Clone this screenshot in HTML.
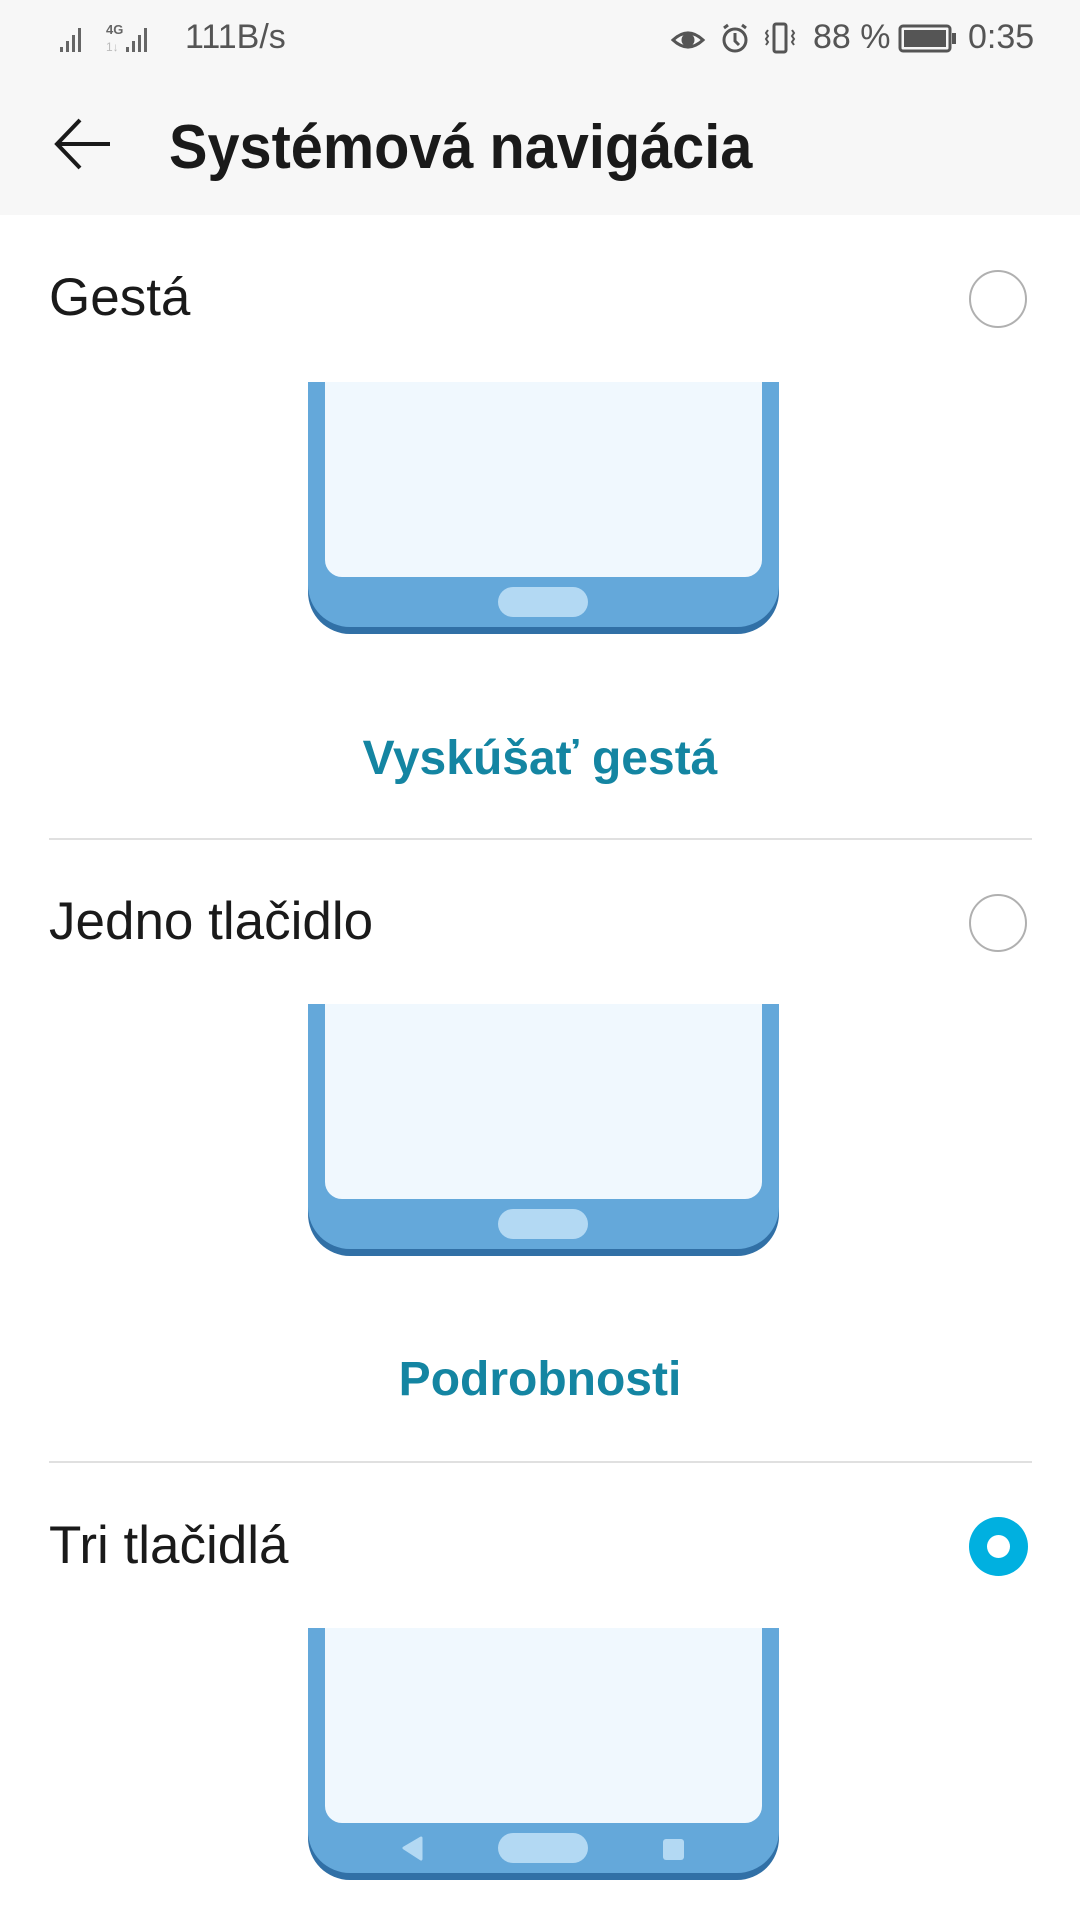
<!DOCTYPE html>
<html><head><meta charset="utf-8"><style>
body{margin:0;width:1080px;height:1920px;background:#fff;font-family:"Liberation Sans",Roboto,sans-serif;position:relative;overflow:hidden}
.hdr{position:absolute;left:0;top:0;width:1080px;height:215px;background:#f7f7f7}
.t{position:absolute;white-space:nowrap}
.sb{color:#555;font-size:34px;top:18px}
.lbl{left:49px;font-size:53px;color:#1a1a1a}
.btn{left:0;width:1080px;text-align:center;font-size:48px;font-weight:bold;color:#1485a2}
.div{position:absolute;left:49px;width:983px;height:2px;background:#e0e0e0}
.radio{position:absolute;left:969px;width:54px;height:54px;border:2.5px solid #b0b0b0;border-radius:50%}
.phone{position:absolute;left:308px}
</style></head><body>
<div class="hdr"></div>
<svg class="t" style="left:58px;top:20px" width="110" height="34" viewBox="0 0 110 34">
<g fill="#666"><rect x="2" y="27" width="3" height="5"/><rect x="8" y="21" width="3" height="11"/><rect x="14" y="15" width="3" height="17"/><rect x="20" y="8" width="3" height="24"/>
<text x="48" y="14" font-size="13" font-weight="bold" font-family="Liberation Sans">4G</text>
<rect x="68" y="27" width="3" height="5"/><rect x="74" y="21" width="3" height="11"/><rect x="80" y="15" width="3" height="17"/><rect x="86" y="8" width="3" height="24"/></g>
<text x="48" y="31" font-size="12" fill="#bbb" font-family="Liberation Sans">1↓</text></svg>
<div class="t sb" style="left:185px">111B/s</div>
<svg class="t" style="left:670px;top:20px" width="140" height="36" viewBox="0 0 140 36">
<g fill="none" stroke="#555" stroke-width="3"><path d="M3 20 Q18 6 33 20 Q18 34 3 20Z"/><circle cx="18" cy="20" r="5" fill="#555"/>
<circle cx="65" cy="20" r="11"/><path d="M65 13v8l4 4M54 8l4-3M76 8l-4-3"/>
<rect x="104" y="4" width="12" height="28" rx="2"/><path d="M98 10l-2 3 2 3-2 3 2 3-2 3M122 10l2 3-2 3 2 3-2 3 2 3" stroke-width="2"/></g></svg>
<div class="t sb" style="left:813px">88 %</div>
<svg class="t" style="left:898px;top:24px" width="60" height="30"><rect x="2" y="2" width="50" height="25" rx="3" fill="none" stroke="#555" stroke-width="3"/><rect x="6" y="6" width="42" height="17" fill="#555"/><rect x="54" y="9" width="4" height="11" fill="#555"/></svg>
<div class="t sb" style="left:968px">0:35</div>
<svg class="t" style="left:52px;top:116px" width="62" height="56"><path d="M58 28H6M28 4L5 28l23 24" fill="none" stroke="#1a1a1a" stroke-width="4"/></svg>
<div class="t" style="left:169px;top:112px;font-size:62px;font-weight:bold;color:#1a1a1a;transform:scaleX(0.93);transform-origin:0 0">Systémová navigácia</div>

<div class="t lbl" style="top:267px">Gestá</div>
<div class="radio" style="top:270px"></div>
<svg class="phone" style="top:382px" width="471" height="252"><rect width="471" height="252" rx="42" fill="#3170a6"/><rect width="471" height="40" fill="#3170a6"/><rect width="471" height="245" rx="42" fill="#64a8da"/><rect width="471" height="60" fill="#64a8da"/><path d="M17 0H454V178a17 17 0 0 1-17 17H34a17 17 0 0 1-17-17Z" fill="#f0f8fe"/><rect x="190" y="205" width="90" height="30" rx="15" fill="#b3d9f3"/></svg>
<div class="t btn" style="top:731px">Vyskúšať gestá</div>
<div class="div" style="top:838px"></div>

<div class="t lbl" style="top:891px">Jedno tlačidlo</div>
<div class="radio" style="top:894px"></div>
<svg class="phone" style="top:1004px" width="471" height="252"><rect width="471" height="252" rx="42" fill="#3170a6"/><rect width="471" height="40" fill="#3170a6"/><rect width="471" height="245" rx="42" fill="#64a8da"/><rect width="471" height="60" fill="#64a8da"/><path d="M17 0H454V178a17 17 0 0 1-17 17H34a17 17 0 0 1-17-17Z" fill="#f0f8fe"/><rect x="190" y="205" width="90" height="30" rx="15" fill="#b3d9f3"/></svg>
<div class="t btn" style="top:1352px">Podrobnosti</div>
<div class="div" style="top:1461px"></div>

<div class="t lbl" style="top:1515px">Tri tlačidlá</div>
<div style="position:absolute;left:969px;top:1517px;width:59px;height:59px;border-radius:50%;background:#00b0e0"></div>
<div style="position:absolute;left:987px;top:1535px;width:23px;height:23px;border-radius:50%;background:#fff"></div>
<svg class="phone" style="top:1628px" width="471" height="252"><rect width="471" height="252" rx="42" fill="#3170a6"/><rect width="471" height="40" fill="#3170a6"/><rect width="471" height="245" rx="42" fill="#64a8da"/><rect width="471" height="60" fill="#64a8da"/><path d="M17 0H454V178a17 17 0 0 1-17 17H34a17 17 0 0 1-17-17Z" fill="#f0f8fe"/><rect x="190" y="205" width="90" height="30" rx="15" fill="#b3d9f3"/><path d="M113 210L96 220l17 11Z" fill="#b3d9f3" stroke="#b3d9f3" stroke-width="3" stroke-linejoin="round"/><rect x="355" y="211" width="21" height="21" rx="3" fill="#b3d9f3"/></svg>
</body></html>
